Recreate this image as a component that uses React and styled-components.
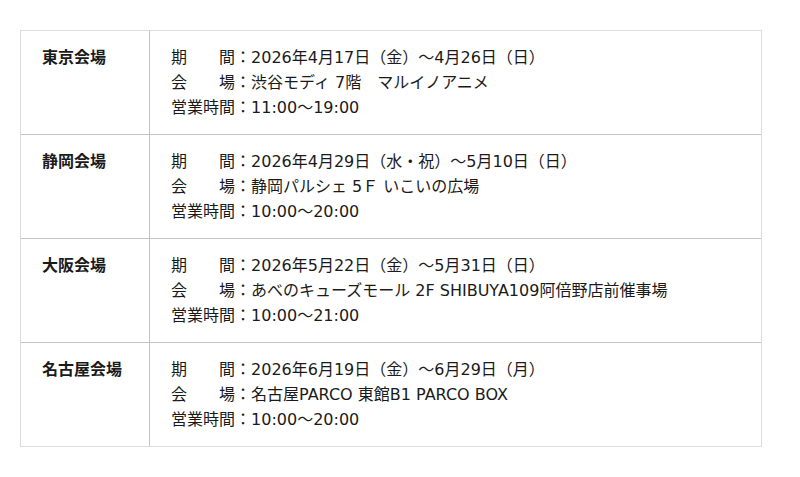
import styled, { createGlobalStyle } from 'styled-components';

const GlobalStyle = createGlobalStyle`
  body {
    margin: 0;
    background: #fff;
    font-family: "DejaVu Sans", "Noto Sans CJK JP", sans-serif;
    color: #1a1a1a;
  }
`;

const Page = styled.div`
  padding: 30px 38px 30px 20px;
`;

const Table = styled.div`
  border: 1px solid #dcdcdc;
  width: 742px;
  box-sizing: border-box;
`;

const Row = styled.div`
  display: grid;
  grid-template-columns: 129px 1fr;
  height: ${props => props.last ? "103px" : "104px"};
  box-sizing: border-box;
  border-bottom: ${props => props.last ? "none" : "1px solid #c4c4c4"};
`;

const Venue = styled.div`
  border-right: 1px solid #c4c4c4;
  padding: 14px 0 0 21px;
  font-size: 16px;
  font-weight: bold;
  line-height: 25px;
`;

const Details = styled.div`
  padding: 14px 0 0 21px;
  font-size: 16px;
  line-height: 25px;
`;

const Line = styled.div`
  white-space: nowrap;
`;

const venues = [
  {
    name: "東京会場",
    period: "2026年4月17日（金）〜4月26日（日）",
    place: "渋谷モディ 7階　マルイノアニメ",
    hours: "11:00〜19:00",
  },
  {
    name: "静岡会場",
    period: "2026年4月29日（水・祝）〜5月10日（日）",
    place: "静岡パルシェ 5Ｆ いこいの広場",
    hours: "10:00〜20:00",
  },
  {
    name: "大阪会場",
    period: "2026年5月22日（金）〜5月31日（日）",
    place: "あべのキューズモール 2F SHIBUYA109阿倍野店前催事場",
    hours: "10:00〜21:00",
  },
  {
    name: "名古屋会場",
    period: "2026年6月19日（金）〜6月29日（月）",
    place: "名古屋PARCO 東館B1 PARCO BOX",
    hours: "10:00〜20:00",
  },
];

export default function App() {
  return (
    <>
      <GlobalStyle />
      <Page>
        <Table>
          {venues.map((v, i) => (
            <Row key={v.name} last={i === venues.length - 1}>
              <Venue>{v.name}</Venue>
              <Details>
                <Line>期　　間：{v.period}</Line>
                <Line>会　　場：{v.place}</Line>
                <Line>営業時間：{v.hours}</Line>
              </Details>
            </Row>
          ))}
        </Table>
      </Page>
    </>
  );
}
